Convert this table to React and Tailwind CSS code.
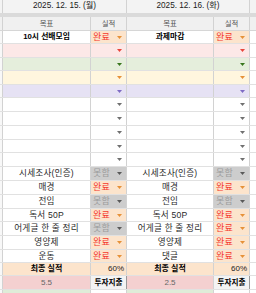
const FONT = "font-['Liberation_Sans','Noto_Sans_CJK_KR',sans-serif]";

const TONES = {
  white: { bg: 'bg-white', arrow: '#707070' },
  pink: { bg: 'bg-[#fce8e7]', arrow: '#e8453c' },
  green: { bg: 'bg-[#e5eedc]', arrow: '#38761d' },
  yellow: { bg: 'bg-[#fff6de]', arrow: '#e69138' },
  purple: { bg: 'bg-[#e6e2f4]', arrow: '#7e6bc4' },
};

// 19 data rows, each height includes its 1px bottom line
const HEIGHTS = [13, 14, 13, 14, 13, 14, 14, 14, 13, 14, 14, 14, 14, 13, 14, 14, 13, 13, 14];

const DAYS = [
  {
    date: '2025. 12. 15. (월)',
    top: '10시 선배모임',
    tasks: [
      ['시세조사(인증)', 'miss'],
      ['매경', 'done'],
      ['전임', 'miss'],
      ['독서 50P', 'done'],
      ['어게글 한 줄 정리', 'miss'],
      ['영양제', 'done'],
      ['운동', 'done'],
    ],
    rate: '60%',
    spend: '5.5',
  },
  {
    date: '2025. 12. 16. (화)',
    top: '과제마감',
    tasks: [
      ['시세조사(인증)', 'miss'],
      ['매경', 'done'],
      ['전임', 'miss'],
      ['독서 50P', 'done'],
      ['어게글 한 줄 정리', 'done'],
      ['영양제', 'done'],
      ['댓글', 'done'],
    ],
    rate: '60%',
    spend: '2.5',
  },
];

const ROW_TONES = ['white', 'pink', 'green', 'yellow', 'purple', 'white', 'white', 'white', 'white', 'white'];

function Arrow({ color }) {
  return (
    <svg width="5" height="3" viewBox="0 0 5 3" className="shrink-0">
      <path d="M0 0H5L2.5 3Z" fill={color} />
    </svg>
  );
}

function StatusCell({ status, tone, width }) {
  if (status === 'done') {
    return (
      <div className={`${width} flex h-full items-center justify-between border-r border-[#d2d2d2] bg-[#fce4cc] pl-[2px] pr-[4px]`}>
        <span className="text-[9px] leading-none tracking-[0.3px] text-[#f4392c]">완료</span>
        <Arrow color="#e69138" />
      </div>
    );
  }
  if (status === 'miss') {
    return (
      <div className={`${width} flex h-full items-center justify-between border-r border-[#d2d2d2] bg-[#cdcdcd] pl-[2px] pr-[4px]`}>
        <span className="text-[9px] leading-none tracking-[0.3px] text-[#9c9c9c]">못함</span>
        <Arrow color="#595959" />
      </div>
    );
  }
  return (
    <div className={`${width} flex h-full items-center justify-end border-r border-[#d2d2d2] ${TONES[tone].bg} pr-[4px]`}>
      <Arrow color={TONES[tone].arrow} />
    </div>
  );
}

function GoalCell({ children, width, bg = 'bg-white' }) {
  return (
    <div className={`${width} flex h-full items-center justify-center border-r border-[#d2d2d2] ${bg}`}>
      {children}
    </div>
  );
}

function dayCells(day, i, widths) {
  const [gw, sw] = widths;
  if (i === 0) {
    return [
      <GoalCell key="g" width={gw}>
        <span className="text-[7.8px] font-bold leading-none text-black">{day.top}</span>
      </GoalCell>,
      <StatusCell key="s" status="done" width={sw} />,
    ];
  }
  if (i < 10) {
    const tone = ROW_TONES[i];
    return [
      <GoalCell key="g" width={gw} bg={TONES[tone].bg} />,
      <StatusCell key="s" tone={tone} width={sw} />,
    ];
  }
  if (i < 17) {
    const [label, status] = day.tasks[i - 10];
    return [
      <GoalCell key="g" width={gw}>
        <span className="text-[8.6px] leading-none tracking-[0.2px] text-[#2a2a2a]">{label}</span>
      </GoalCell>,
      <StatusCell key="s" status={status} width={sw} />,
    ];
  }
  if (i === 17) {
    return [
      <GoalCell key="g" width={gw} bg="bg-[#fce4cc]">
        <span className="text-[8px] font-bold leading-none text-black">최종 실적</span>
      </GoalCell>,
      <div key="s" className={`${sw} flex h-full items-center justify-end border-r border-[#d2d2d2] bg-[#fce4cc] pr-[2px]`}>
        <span className="text-[8px] leading-none text-[#222]">{day.rate}</span>
      </div>,
    ];
  }
  return [
    <GoalCell key="g" width={gw} bg="bg-[#f4d0d0]">
      <span className="text-[8px] leading-none text-[#666]">{day.spend}</span>
    </GoalCell>,
    <div key="s" className={`${sw} flex h-full items-center justify-center border-r border-[#9a9a9a] bg-[#f3f3f3]`}>
      <span className="text-[7.6px] font-bold leading-none text-black">투자지출</span>
    </div>,
  ];
}

function DataRow({ i }) {
  const tall = HEIGHTS[i] === 14;
  return (
    <div className={`flex ${tall ? 'h-[14px]' : 'h-[13px]'} border-b border-[#e1e1e1]`}>
      <div className="h-full w-[3px] border-r border-[#d2d2d2] bg-[#f8f8f8]" />
      {dayCells(DAYS[0], i, ['w-[88px]', 'w-[36px]'])}
      {dayCells(DAYS[1], i, ['w-[87px]', 'w-[36px]'])}
      <div className="h-full flex-1 bg-white" />
    </div>
  );
}

export default function App() {
  return (
    <div className={`${FONT} h-[293px] w-[256px] overflow-hidden bg-white`}>
      {/* date header */}
      <div className="flex h-[13px] bg-[#f3f3f3]">
        <div className="h-full w-[3px] border-r border-[#d2d2d2]" />
        <div className="flex h-full w-[124px] items-center justify-center border-r border-[#d2d2d2]">
          <span className="text-[8.2px] leading-none text-[#1a1a1a]">{DAYS[0].date}</span>
        </div>
        <div className="flex h-full w-[123px] items-center justify-center border-r border-[#d2d2d2]">
          <span className="text-[8.2px] leading-none text-[#1a1a1a]">{DAYS[1].date}</span>
        </div>
        <div className="h-full flex-1" />
      </div>
      <div className="h-[4px] bg-[#dadada]" />
      {/* column header */}
      <div className="flex h-[14px] border-b border-[#d6d6d6] bg-[#f0f0f0]">
        <div className="h-full w-[3px] border-r border-[#d2d2d2]" />
        {[0, 1].map((d) => (
          <div key={d} className="flex h-full">
            <div className={`${d === 0 ? 'w-[88px]' : 'w-[87px]'} flex h-full items-center justify-center border-r border-[#d2d2d2]`}>
              <span className="text-[7.4px] leading-none text-[#555]">목표</span>
            </div>
            <div className="flex h-full w-[36px] items-center justify-center border-r border-[#d2d2d2]">
              <span className="text-[7.4px] leading-none text-[#555]">실적</span>
            </div>
          </div>
        ))}
        <div className="h-full flex-1" />
      </div>
      {HEIGHTS.map((_, i) => (
        <DataRow key={i} i={i} />
      ))}
      {/* next row peeking in */}
      <div className="flex h-[3px]">
        <div className="h-full w-[3px] border-r border-[#d2d2d2] bg-[#f8f8f8]" />
        <div className="h-full w-[88px] border-r border-[#d2d2d2] bg-[#dfecd8]" />
        <div className="h-full w-[36px] border-r border-[#d2d2d2] bg-white" />
        <div className="h-full w-[87px] border-r border-[#d2d2d2] bg-[#dfecd8]" />
        <div className="h-full w-[36px] border-r border-[#d2d2d2] bg-white" />
        <div className="h-full flex-1 bg-white" />
      </div>
    </div>
  );
}
